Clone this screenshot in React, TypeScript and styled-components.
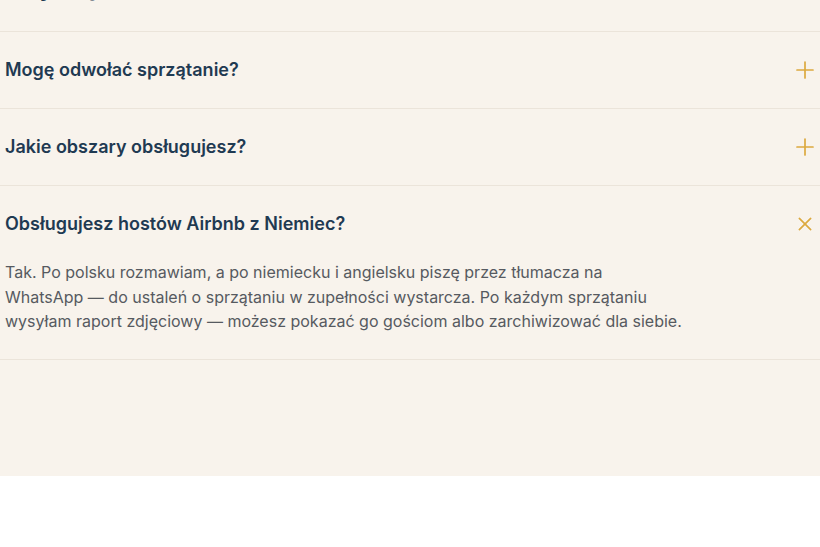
import { useState } from 'react';
import styled, { createGlobalStyle } from 'styled-components';

const GlobalStyle = createGlobalStyle`
  html, body {
    margin: 0;
    padding: 0;
    background: #ffffff;
    font-family: Inter, 'Noto Sans', sans-serif;
    -webkit-font-smoothing: antialiased;
  }
`;

type Faq = { q: string; a?: string };

const faqs: Faq[] = [
  { q: 'Mogę odwołać sprzątanie?' },
  { q: 'Jakie obszary obsługujesz?' },
  {
    q: 'Obsługujesz hostów Airbnb z Niemiec?',
    a: 'Tak. Po polsku rozmawiam, a po niemiecku i angielsku piszę przez tłumacza na WhatsApp — do ustaleń o sprzątaniu w zupełności wystarcza. Po każdym sprzątaniu wysyłam raport zdjęciowy — możesz pokazać go gościom albo zarchiwizować dla siebie.',
  },
];

const PlusIcon = ({ open }: { open: boolean }) => (
  <Icon $open={open} viewBox="0 0 18 18" width="18" height="18" aria-hidden>
    <path d="M9 1v16M1 9h16" />
  </Icon>
);

const App = () => {
  const [openIndex, setOpenIndex] = useState(2);

  return (
    <>
      <GlobalStyle />
      <Section>
        <Title>Najczęstsze kwestie</Title>
        <List>
          {faqs.map((item, i) => {
            const open = openIndex === i;
            return (
              <Item key={item.q}>
                <Question $open={open} onClick={() => setOpenIndex(open ? -1 : i)}>
                  <span>{item.q}</span>
                  <PlusIcon open={open} />
                </Question>
                {open && item.a && <Answer>{item.a}</Answer>}
              </Item>
            );
          })}
        </List>
      </Section>
    </>
  );
};

const Section = styled.section`
  background: #f8f3ec;
  margin-top: -32px;
  padding: 0 0 116px;
`;

const Title = styled.h2`
  margin: 0 0 29px;
  padding: 0 5px;
  font-size: 28px;
  line-height: 34px;
  font-weight: 700;
  color: #1f3a52;
  letter-spacing: -0.3px;
`;

const List = styled.div`
  display: flex;
  flex-direction: column;
  border-top: 1px solid #ebe4da;
`;

const Item = styled.div`
  border-bottom: 1px solid #ebe4da;
`;

const Question = styled.button<{ $open: boolean }>`
  width: 100%;
  display: flex;
  align-items: center;
  justify-content: space-between;
  gap: 16px;
  padding: 28px 6px ${({ $open }) => ($open ? '26px' : '28px')} 5px;
  margin: 0;
  border: 0;
  background: transparent;
  cursor: pointer;
  text-align: left;
  font-family: Inter, 'Noto Sans', sans-serif;
  font-size: 18px;
  line-height: 20px;
  font-weight: 600;
  color: #1f3a52;
`;

const Icon = styled.svg<{ $open: boolean }>`
  flex-shrink: 0;
  fill: none;
  stroke: #dca93f;
  stroke-width: 1.7;
  stroke-linecap: round;
  transform: rotate(${({ $open }) => ($open ? '45deg' : '0deg')});
`;

const Answer = styled.p`
  margin: 0;
  padding: 0 0 25px 5px;
  max-width: 680px;
  font-size: 16px;
  line-height: 24.5px;
  color: #565a60;
`;

export default App;
